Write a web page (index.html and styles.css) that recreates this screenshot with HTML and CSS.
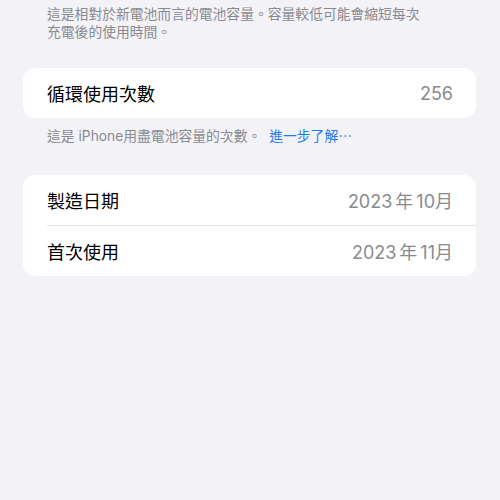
FILE: index.html
```html
<!DOCTYPE html>
<html lang="zh-Hant">
<head>
<meta charset="utf-8">
<title>電池健康度</title>
<link rel="stylesheet" href="styles.css">
</head>
<body>
<main class="screen">
  <p class="note">這是相對於新電池而言的電池容量。容量較低可能會縮短每次充電後的使用時間。</p>

  <section class="group group-cycles">
    <div class="row">
      <span class="label">循環使用次數</span>
      <span class="value">256</span>
    </div>
  </section>
  <p class="note note-after">這是 iPhone用盡電池容量的次數。<a class="link" href="#">進一步了解⋯</a></p>

  <section class="group group-dates">
    <div class="row">
      <span class="label">製造日期</span>
      <span class="value">2023<span class="unit">年</span>10月</span>
    </div>
    <div class="row">
      <span class="label">首次使用</span>
      <span class="value">2023<span class="unit">年</span>11月</span>
    </div>
  </section>
</main>
</body>
</html>
```
FILE: styles.css
```css
html, body {
  margin: 0;
  padding: 0;
  background: #f2f2f7;
}

body {
  width: 500px;
  height: 500px;
  overflow: hidden;
  font-family: "Inter", "Noto Sans CJK TC", sans-serif;
  -webkit-font-smoothing: antialiased;
}

.screen {
  display: flex;
  flex-direction: column;
  padding: 5px 24px 0 23px;
}

.note {
  margin: 0;
  padding: 0 24px;
  font-size: 13.8px;
  line-height: 18px;
  color: #8a8a8e;
  width: 378px;
}

.note-after {
  margin-top: 9px;
  width: auto;
}

.link {
  color: #1a7cf0;
  text-decoration: none;
  margin-left: 8px;
}

.group {
  background: #ffffff;
  border-radius: 12px;
  overflow: hidden;
}

.group-cycles {
  margin-top: 27px;
}

.group-dates {
  margin-top: 30px;
}

.row {
  display: flex;
  align-items: center;
  justify-content: space-between;
  height: 50px;
  margin-left: 24px;
  padding-right: 23px;
  font-size: 18px;
}

.row + .row {
  border-top: 1px solid #e3e3e6;
}

.label {
  color: #000000;
}

.value {
  color: #8a8a8e;
}

/* CJK unit between the year and month digits gets a little breathing room */
.unit {
  margin: 0 3px;
}
```
